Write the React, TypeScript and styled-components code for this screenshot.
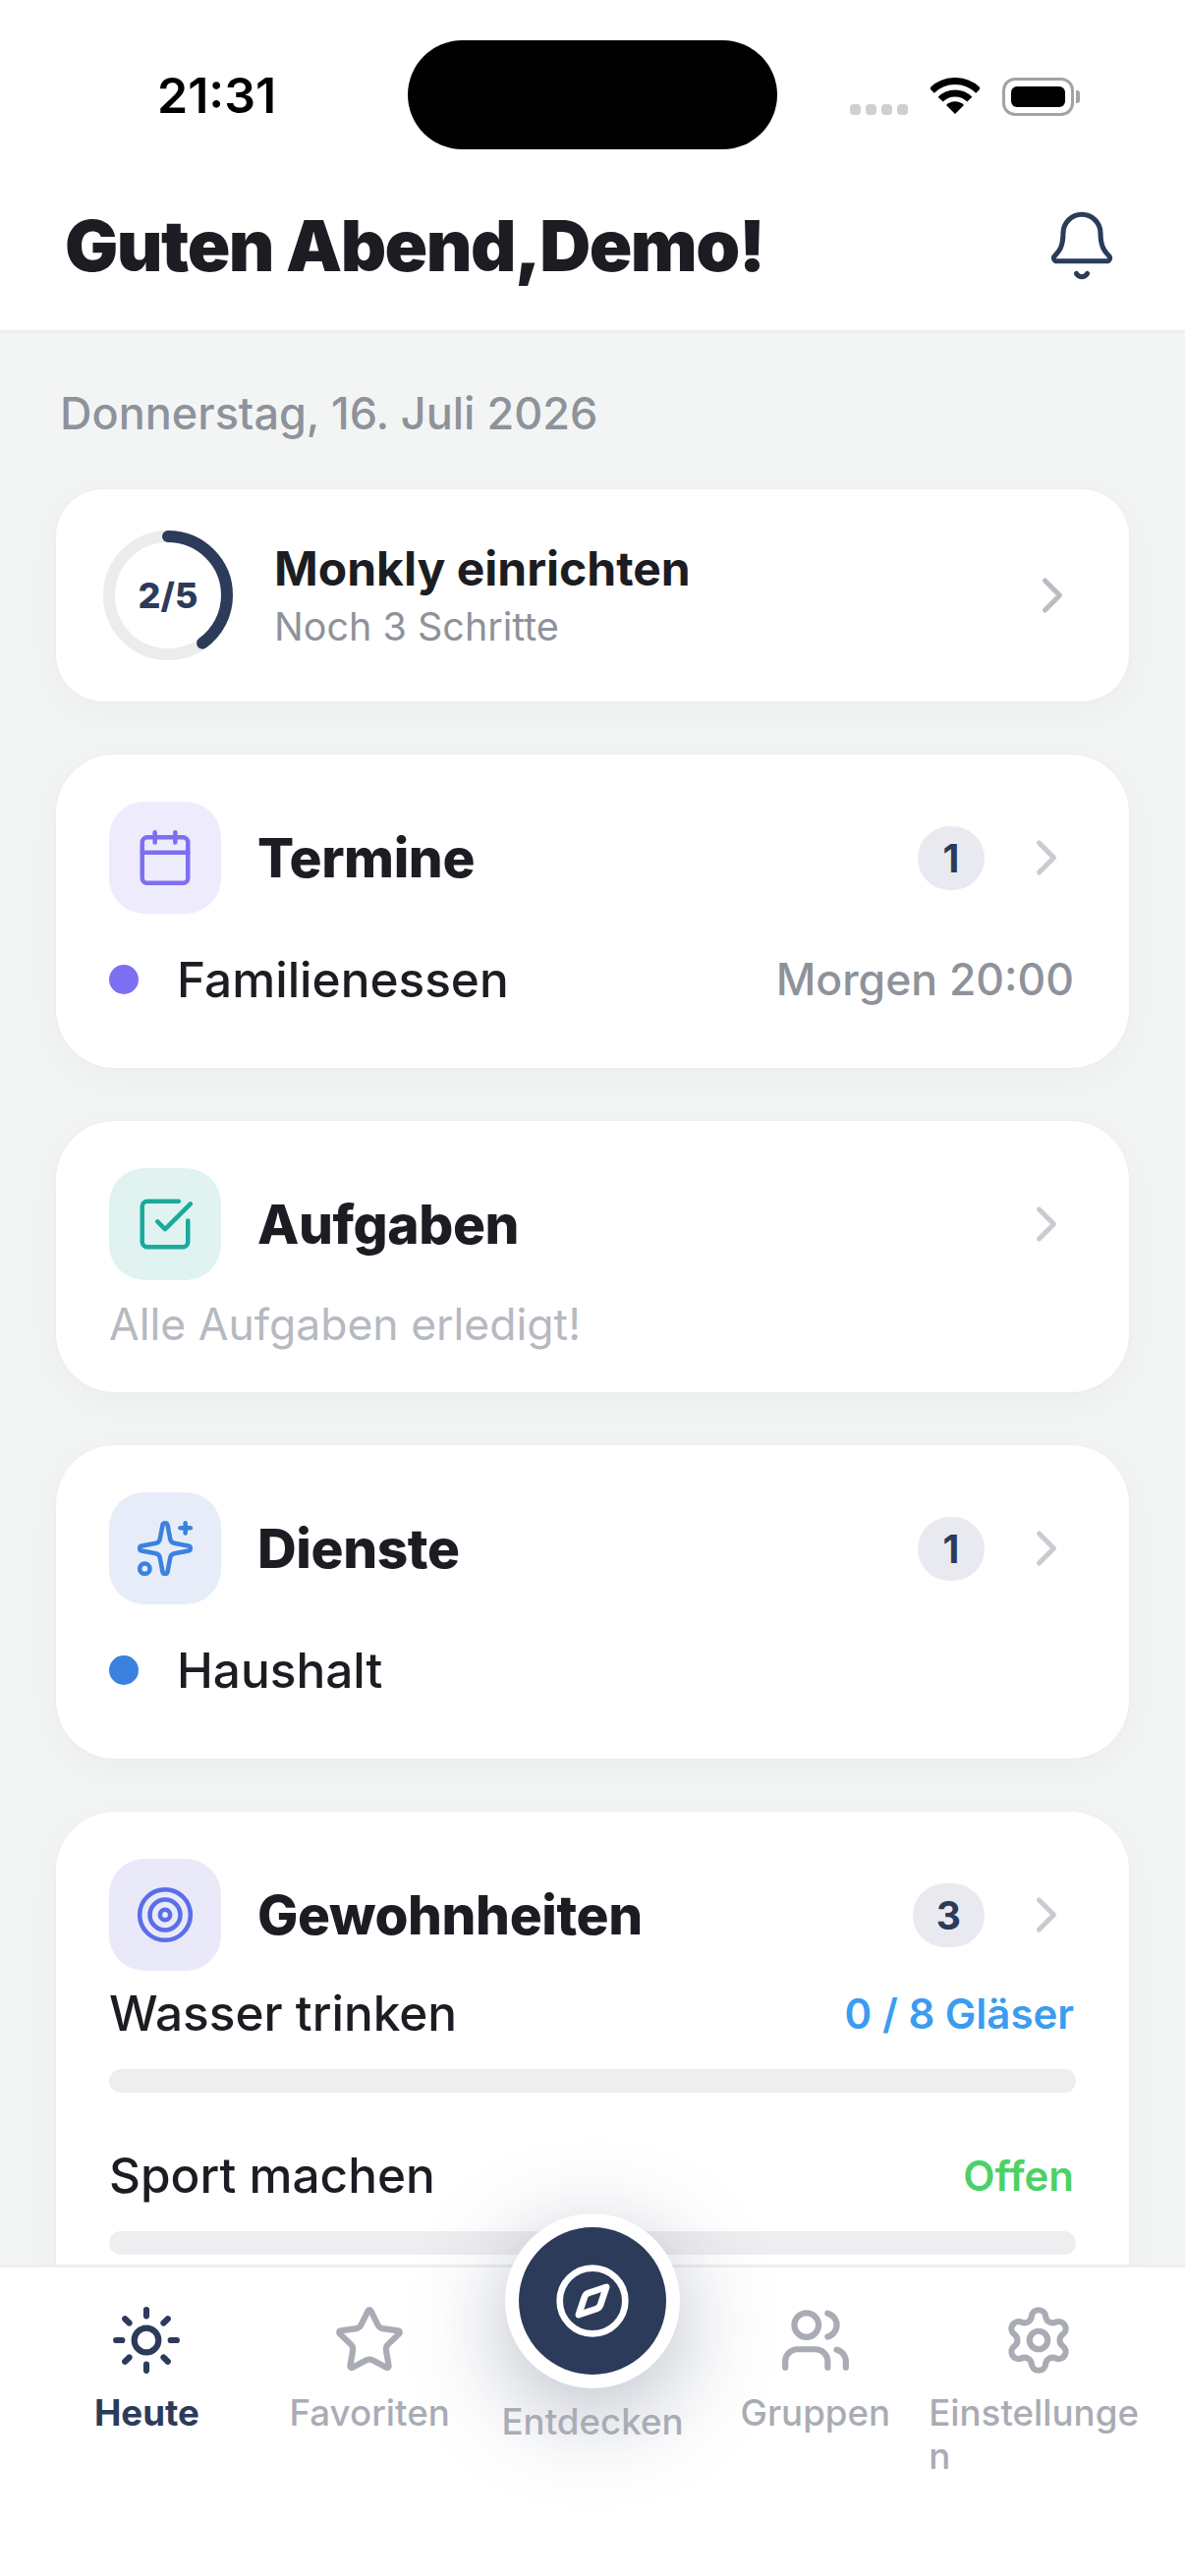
import React from 'react'
import styled, { createGlobalStyle } from 'styled-components'
import { Bell, Calendar, ChevronRight, Compass, Settings, Sparkles, SquareCheckBig, Star, Sun, Target, Users } from 'lucide-react'

const navy = '#2c3b5a'
const ink = '#1c1d22'
const grey = '#8e929b'

const GlobalStyle = createGlobalStyle`
  html, body { margin: 0; padding: 0; background: #fff; }
  body { font-family: Inter, "Noto Sans", sans-serif; }
  * { box-sizing: border-box; }
`

const Phone = styled.div`
  width: 1206px;
  height: 2622px;
  display: flex;
  flex-direction: column;
  overflow: hidden;
  background: #f3f5f4;
`

const TopArea = styled.header`
  flex: none;
  background: #fff;
  border-bottom: 3px solid #efeff2;
  height: 339px;
`

const StatusBar = styled.div`
  display: grid;
  grid-template-columns: 415px 376px 1fr;
  padding-top: 41px;
  height: 152px;
`

const Time = styled.div`
  padding: 29px 0 0 160px;
  font-size: 50px;
  line-height: 54px;
  font-weight: 600;
  color: #000;
`

const Island = styled.div`
  height: 111px;
  border-radius: 56px;
  background: #000;
`

const Indicators = styled.div`
  display: flex;
  align-items: flex-end;
  height: 76px;
  padding-left: 74px;
`

const SignalDots = styled.div`
  display: flex;
  gap: 5px;
  margin-right: 23px;
`

const SignalDot = styled.span`
  width: 11px;
  height: 11px;
  border-radius: 4px;
  background: #cfcfcf;
`

const Battery = styled.div`
  position: relative;
  width: 73px;
  height: 39px;
  margin-left: 23px;
  margin-bottom: -1px;
  padding: 6px;
  border: 3px solid #a3a3a3;
  border-radius: 13px;

  &::before {
    content: '';
    display: block;
    height: 100%;
    border-radius: 6px;
    background: #000;
  }

  &::after {
    content: '';
    position: absolute;
    right: -9px;
    top: 10px;
    width: 4px;
    height: 13px;
    border-radius: 0 3px 3px 0;
    background: #a3a3a3;
  }
`

const HeaderRow = styled.div`
  height: 184px;
  padding: 12px 67px 0 66px;
  display: flex;
  align-items: center;
  justify-content: space-between;
  color: ${navy};
`

const Greeting = styled.h1`
  margin: 0;
  font-size: 72px;
  line-height: 88px;
  font-weight: 900;
  letter-spacing: -1.5px;
  color: ${ink};
`

const TightGap = styled.span`
  letter-spacing: -6px;
`

const Scroll = styled.main`
  flex: 1;
  min-height: 0;
  overflow: hidden;
  padding: 50px 57px 0;
  display: flex;
  flex-direction: column;
  gap: 54px;
`

const DateLine = styled.div`
  margin: 2px 0 -7px 4px;
  font-size: 45px;
  line-height: 60px;
  font-weight: 500;
  color: ${grey};
`

const Card = styled.section`
  flex: none;
  background: #fff;
  border-radius: 60px;
  padding: 48px 54px 60px;
  box-shadow: 0 9px 36px rgba(30, 35, 45, 0.035), 0 0 0 1.5px rgba(30, 35, 45, 0.012);
`

const SetupCard = styled(Card)`
  height: 216px;
  border-radius: 48px;
  padding: 0 48px;
  display: flex;
  align-items: center;
  color: #b9bcc3;
`

const Ring = styled.div`
  position: relative;
  width: 132px;
  height: 132px;
  flex: none;
  display: flex;
  align-items: center;
  justify-content: center;
  font-size: 36px;
  font-weight: 800;
  color: ${navy};
`

const RingArt = styled.svg`
  position: absolute;
  inset: 0;
`

const SetupText = styled.div`
  flex: 1;
  margin-left: 42px;
`

const SetupTitle = styled.div`
  font-size: 48px;
  line-height: 60px;
  font-weight: 700;
  color: ${ink};
`

const SetupSub = styled.div`
  margin-top: 4px;
  font-size: 39.5px;
  line-height: 50px;
  font-weight: 400;
  color: ${grey};
`

const CardHead = styled.div`
  display: flex;
  align-items: center;
  height: 114px;
`

const IconTile = styled.div<{ $bg: string; $fg: string }>`
  width: 114px;
  height: 114px;
  flex: none;
  display: flex;
  align-items: center;
  justify-content: center;
  border-radius: 36px;
  background: ${(p) => p.$bg};
  color: ${(p) => p.$fg};
`

const CardTitle = styled.h2`
  flex: 1;
  margin: 0 0 0 37px;
  font-size: 55px;
  line-height: 66px;
  font-weight: 800;
  letter-spacing: -0.4px;
  color: ${ink};
`

const CountBadge = styled.div`
  min-width: 68px;
  height: 65px;
  padding: 0 24px;
  margin-right: 33px;
  display: flex;
  align-items: center;
  justify-content: center;
  border-radius: 33px;
  background: #e9eaef;
  font-size: 39px;
  font-weight: 700;
  color: ${navy};
`

const Chevron = styled.span`
  display: flex;
  color: #c9cbd1;
`

const ItemRow = styled.div`
  margin-top: 37px;
  display: flex;
  align-items: center;
  height: 60px;
`

const Dot = styled.span<{ $color: string }>`
  width: 30px;
  height: 30px;
  border-radius: 50%;
  background: ${(p) => p.$color};
`

const ItemLabel = styled.div`
  flex: 1;
  margin-left: 39px;
  font-size: 49.5px;
  font-weight: 500;
  color: ${ink};
`

const ItemMeta = styled.div`
  font-size: 44.5px;
  font-weight: 500;
  color: ${grey};
  margin-right: 2px;
`

const EmptyNote = styled.div`
  margin-top: 18px;
  margin-bottom: -18px;
  font-size: 44.5px;
  line-height: 54px;
  color: #b6b9c1;
`

const HabitRow = styled.div`
  display: flex;
  justify-content: space-between;
  align-items: center;
  height: 60px;
  margin-top: 13px;
`

const HabitName = styled.div`
  font-size: 49.5px;
  font-weight: 500;
  color: ${ink};
`

const HabitValue = styled.div<{ $color: string }>`
  font-size: 42px;
  font-weight: 600;
  margin-right: 2px;
  color: ${(p) => p.$color};
`

const Track = styled.div`
  height: 24px;
  margin: 27px 0 54px;
  border-radius: 12px;
  background: #eeeef1;
`

const TabBar = styled.nav`
  position: relative;
  z-index: 2;
  flex: none;
  height: 317px;
  padding: 37px 36px 0;
  display: grid;
  grid-template-columns: repeat(5, 1fr);
  align-items: start;
  background: #fff;
  border-top: 3px solid #efeff2;
`

const Tab = styled.div<{ $active?: boolean }>`
  display: flex;
  flex-direction: column;
  align-items: center;
  padding: 0 2px;
  color: ${(p) => (p.$active ? navy : '#a9acb4')};
`

const TabLabel = styled.div<{ $active?: boolean }>`
  margin-top: 15px;
  max-width: 100%;
  font-size: 36.7px;
  line-height: 44px;
  font-weight: ${(p) => (p.$active ? 700 : 500)};
  word-break: break-all;
`

const CenterTab = styled(Tab)`
  margin-top: -92px;
`

const CenterRing = styled.div`
  width: 178px;
  height: 178px;
  padding: 14px;
  border-radius: 50%;
  background: #fff;
  box-shadow: 0 24px 96px rgba(44, 59, 90, 0.34);
`

const CenterButton = styled.div`
  width: 150px;
  height: 150px;
  display: flex;
  align-items: center;
  justify-content: center;
  border-radius: 50%;
  background: ${navy};
  color: #fff;
`

const CenterLabel = styled(TabLabel)`
  margin-top: 12px;
`

function WifiIcon() {
  return (
    <svg width="50" height="38" viewBox="0 0 50 38">
      <g fill="none" stroke="#000" strokeWidth="7">
        <path d="M1.3 13.3A33.5 33.5 0 0 1 48.7 13.3" />
        <path d="M10.15 22.15A21 21 0 0 1 39.85 22.15" />
      </g>
      <path d="M25 37 16 28A12.7 12.7 0 0 1 34 28Z" fill="#000" />
    </svg>
  )
}

function Arrow() {
  return (
    <Chevron>
      <ChevronRight size={60} strokeWidth={2} />
    </Chevron>
  )
}

// progress ring, r = 60 so the stroke fills the 132 box
function ProgressRing({ done, total }: { done: number; total: number }) {
  const c = 2 * Math.PI * 60
  return (
    <Ring>
      <RingArt width="132" height="132" viewBox="0 0 132 132">
        <circle cx="66" cy="66" r="60" fill="none" stroke="#ececee" strokeWidth="12" />
        <circle
          cx="66"
          cy="66"
          r="60"
          fill="none"
          stroke={navy}
          strokeWidth="12"
          strokeLinecap="round"
          strokeDasharray={`${(c * done) / total} ${c}`}
          transform="rotate(-90 66 66)"
        />
      </RingArt>
      {done}/{total}
    </Ring>
  )
}

const tabs = [
  { label: 'Heute', Icon: Sun, active: true },
  { label: 'Favoriten', Icon: Star },
  { label: 'Entdecken', Icon: Compass, center: true },
  { label: 'Gruppen', Icon: Users },
  { label: 'Einstellungen', Icon: Settings },
]

export default function App() {
  return (
    <Phone>
      <GlobalStyle />
      <TopArea>
        <StatusBar>
          <Time>21:31</Time>
          <Island />
          <Indicators>
            <SignalDots>
              <SignalDot />
              <SignalDot />
              <SignalDot />
              <SignalDot />
            </SignalDots>
            <WifiIcon />
            <Battery />
          </Indicators>
        </StatusBar>
        <HeaderRow>
          <Greeting>
            Guten Abend<TightGap>, </TightGap>Demo!
          </Greeting>
          <Bell size={76} strokeWidth={1.6} />
        </HeaderRow>
      </TopArea>

      <Scroll>
        <DateLine>Donnerstag, 16. Juli 2026</DateLine>

        <SetupCard>
          <ProgressRing done={2} total={5} />
          <SetupText>
            <SetupTitle>Monkly einrichten</SetupTitle>
            <SetupSub>Noch 3 Schritte</SetupSub>
          </SetupText>
          <ChevronRight size={60} strokeWidth={2} />
        </SetupCard>

        <Card>
          <CardHead>
            <IconTile $bg="#eeebfd" $fg="#7d6ff2">
              <Calendar size={62} strokeWidth={1.75} />
            </IconTile>
            <CardTitle>Termine</CardTitle>
            <CountBadge>1</CountBadge>
            <Arrow />
          </CardHead>
          <ItemRow>
            <Dot $color="#7d6ff2" />
            <ItemLabel>Familienessen</ItemLabel>
            <ItemMeta>Morgen 20:00</ItemMeta>
          </ItemRow>
        </Card>

        <Card>
          <CardHead>
            <IconTile $bg="#e0f3f1" $fg="#1ba99c">
              <SquareCheckBig size={62} strokeWidth={1.75} />
            </IconTile>
            <CardTitle>Aufgaben</CardTitle>
            <Arrow />
          </CardHead>
          <EmptyNote>Alle Aufgaben erledigt!</EmptyNote>
        </Card>

        <Card>
          <CardHead>
            <IconTile $bg="#e6edf9" $fg="#3b82de">
              <Sparkles size={62} strokeWidth={1.75} />
            </IconTile>
            <CardTitle>Dienste</CardTitle>
            <CountBadge>1</CountBadge>
            <Arrow />
          </CardHead>
          <ItemRow>
            <Dot $color="#3b82de" />
            <ItemLabel>Haushalt</ItemLabel>
          </ItemRow>
        </Card>

        <Card>
          <CardHead>
            <IconTile $bg="#e9e9fa" $fg="#5b6ee8">
              <Target size={62} strokeWidth={1.75} />
            </IconTile>
            <CardTitle>Gewohnheiten</CardTitle>
            <CountBadge>3</CountBadge>
            <Arrow />
          </CardHead>
          <HabitRow>
            <HabitName>Wasser trinken</HabitName>
            <HabitValue $color="#3b9cf0">0 / 8 Gläser</HabitValue>
          </HabitRow>
          <Track />
          <HabitRow>
            <HabitName>Sport machen</HabitName>
            <HabitValue $color="#4cd164">Offen</HabitValue>
          </HabitRow>
          <Track />
        </Card>
      </Scroll>

      <TabBar>
        {tabs.map(({ label, Icon, active, center }) =>
          center ? (
            <CenterTab key={label}>
              <CenterRing>
                <CenterButton>
                  <Icon size={80} strokeWidth={2} />
                </CenterButton>
              </CenterRing>
              <CenterLabel>{label}</CenterLabel>
            </CenterTab>
          ) : (
            <Tab key={label} $active={active}>
              <Icon size={74} strokeWidth={2} />
              <TabLabel $active={active}>{label}</TabLabel>
            </Tab>
          ),
        )}
      </TabBar>
    </Phone>
  )
}
